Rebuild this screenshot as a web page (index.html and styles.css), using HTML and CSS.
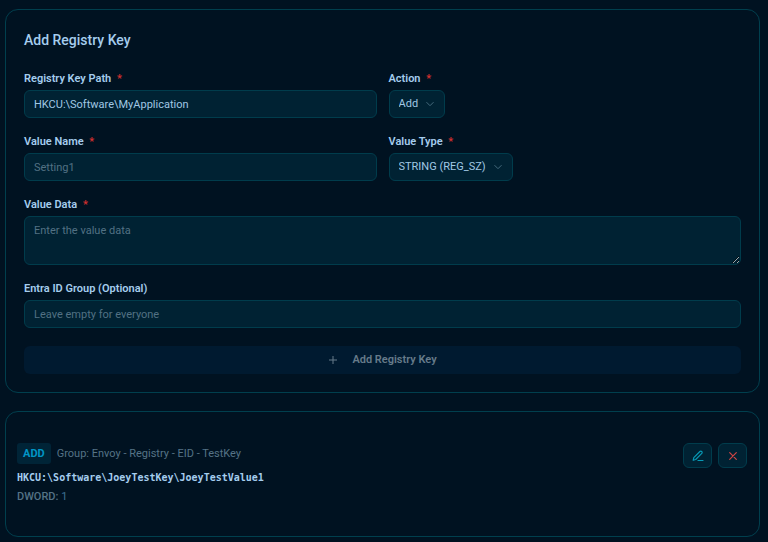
FILE: index.html
```html
<!DOCTYPE html>
<html lang="en">
<head>
<meta charset="utf-8">
<meta name="viewport" content="width=device-width, initial-scale=1">
<title>Registry Keys</title>
<link rel="stylesheet" href="styles.css">
</head>
<body>
<main class="page">
  <form class="card form-card">
    <h2 class="title">Add Registry Key</h2>
    <div class="row">
      <div class="field">
        <label class="label" for="path">Registry Key Path <span class="required">*</span></label>
        <input class="control" id="path" type="text" value="HKCU:\Software\MyApplication">
      </div>
      <div class="field">
        <label class="label" for="action">Action <span class="required">*</span></label>
        <div class="select">
          <select class="control" id="action"><option>Add</option></select>
          <svg class="chevron" viewBox="0 0 10 10" aria-hidden="true"><path d="M1.5 3.2 5 6.7l3.5-3.5"/></svg>
        </div>
      </div>
    </div>
    <div class="row">
      <div class="field">
        <label class="label" for="name">Value Name <span class="required">*</span></label>
        <input class="control" id="name" type="text" placeholder="Setting1">
      </div>
      <div class="field">
        <label class="label" for="type">Value Type <span class="required">*</span></label>
        <div class="select">
          <select class="control" id="type"><option>STRING (REG_SZ)</option></select>
          <svg class="chevron" viewBox="0 0 10 10" aria-hidden="true"><path d="M1.5 3.2 5 6.7l3.5-3.5"/></svg>
        </div>
      </div>
    </div>
    <div class="field">
      <label class="label" for="data">Value Data <span class="required">*</span></label>
      <textarea class="control area" id="data" placeholder="Enter the value data"></textarea>
    </div>
    <div class="field group-field">
      <label class="label" for="group">Entra ID Group (Optional)</label>
      <input class="control" id="group" type="text" placeholder="Leave empty for everyone">
    </div>
    <button class="submit" type="submit" disabled>
      <svg class="plus" viewBox="0 0 10 10" aria-hidden="true"><path d="M5 1v8M1 5h8"/></svg>
      Add Registry Key
    </button>
  </form>

  <section class="card entry">
    <div class="details">
      <div class="meta"><span class="badge">ADD</span><span class="muted">Group: Envoy - Registry - EID - TestKey</span></div>
      <div class="key-path">HKCU:\Software\JoeyTestKey\JoeyTestValue1</div>
      <div class="muted"><span class="kind">DWORD:</span> <span class="data">1</span></div>
    </div>
    <div class="actions">
      <button class="icon-button edit" type="button" aria-label="Edit">
        <svg viewBox="0 0 12 12" aria-hidden="true"><path d="M1.2 10.3 1.8 7.6 7.9 1.5a1.2 1.2 0 0 1 1.7 0l.2.2a1.2 1.2 0 0 1 0 1.7L3.7 9.5ZM6 10.5h5"/></svg>
      </button>
      <button class="icon-button remove" type="button" aria-label="Delete">
        <svg viewBox="0 0 12 12" aria-hidden="true"><path d="m2.7 2.7 6.6 6.6m0-6.6L2.7 9.3"/></svg>
      </button>
    </div>
  </section>
</main>
</body>
</html>
```
FILE: styles.css
```css
* {
  box-sizing: border-box;
}

body {
  margin: 0;
  background: #001221;
  color: #a5cdee;
  font: 11px/16px "Segoe UI", Roboto, sans-serif;
}

.page {
  display: flex;
  flex-direction: column;
  gap: 18px;
  padding: 9px 8px 6px 5px;
}

.card {
  border: 1px solid #003f4e;
  border-radius: 13px;
}

.form-card {
  display: flex;
  flex-direction: column;
  gap: 15px;
  padding: 18px;
}

.title {
  margin: 2px 0 5px;
  font-size: 14px;
  line-height: 20px;
  font-weight: 500;
}

.row {
  display: grid;
  grid-template-columns: 1fr 1fr;
  gap: 12px;
}

.field {
  display: flex;
  flex-direction: column;
  align-items: stretch;
  gap: 2px;
  min-width: 0;
}

.group-field {
  margin: 0 0 3px;
}

.label {
  line-height: 18px;
  font-size: 11px;
  font-weight: 600;
}

.required {
  margin-left: 3px;
  color: #d3302f;
}

.control {
  width: 100%;
  height: 28px;
  margin: 0;
  padding: 0 9px;
  border: 1px solid #003c4c;
  border-radius: 6px;
  background: #002233;
  color: #a0c8e4;
  font: inherit;
  outline: none;
}

.control::placeholder {
  color: #527183;
  opacity: 1;
}

.area {
  height: 49px;
  padding: 6px 9px;
  resize: vertical;
}

.select {
  position: relative;
  align-self: flex-start;
}

.select .control {
  display: block;
  appearance: none;
  width: auto;
  padding-right: 25px;
}

.chevron {
  position: absolute;
  top: 9px;
  right: 10px;
  width: 10px;
  height: 10px;
  pointer-events: none;
  fill: none;
  stroke: #456a7c;
}

.submit {
  display: flex;
  align-items: center;
  justify-content: center;
  gap: 14px;
  height: 28px;
  border: 0;
  border-radius: 6px;
  background: #001a30;
  color: #667b8a;
  font: inherit;
  font-weight: 600;
}

.plus {
  width: 10px;
  height: 10px;
  fill: none;
  stroke: currentColor;
}

.entry {
  display: flex;
  justify-content: space-between;
  align-items: flex-start;
  padding: 31px 12px 31px 11px;
}

.details {
  display: flex;
  flex-direction: column;
  gap: 3px;
}

.meta {
  display: flex;
  align-items: center;
  gap: 6px;
  margin-bottom: 3px;
}

.badge {
  padding: 2px 6px;
  border-radius: 3px;
  background: #002437;
  color: #0095c5;
  line-height: 17px;
  font-weight: 700;
}

.muted {
  color: #557386;
}

.kind {
  font-weight: 500;
}

.data {
  color: #3d7093;
}

.key-path {
  font: 600 10px/16px "DejaVu Sans Mono", monospace;
}

.actions {
  display: flex;
  gap: 6px;
}

.icon-button {
  display: grid;
  place-items: center;
  width: 29px;
  height: 25px;
  padding: 0;
  border: 1px solid #003c4c;
  border-radius: 6px;
  background: #002233;
}

.icon-button svg {
  width: 12px;
  height: 12px;
  fill: none;
  stroke: currentColor;
  stroke-width: 1.2;
  stroke-linecap: round;
  stroke-linejoin: round;
}

.edit {
  color: #0799b5;
}

.remove {
  color: #d04444;
}
```
